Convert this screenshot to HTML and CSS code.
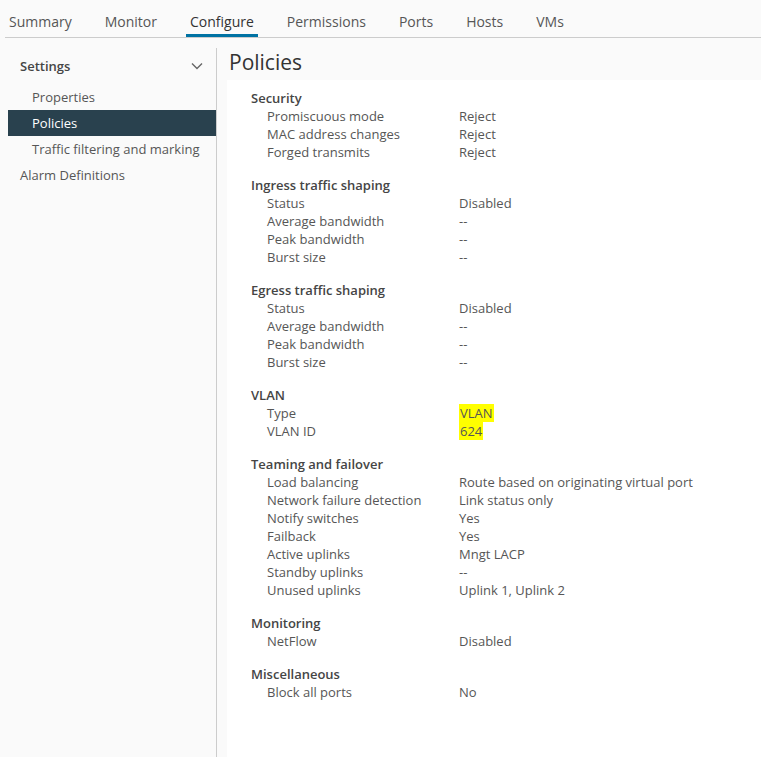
FILE: index.html
```html
<!DOCTYPE html>
<html>
<head>
<meta charset="utf-8">
<link rel="stylesheet" href="styles.css">
</head>
<body>
<nav class="tabs">
  <span class="tab">Summary</span>
  <span class="tab">Monitor</span>
  <span class="tab active">Configure</span>
  <span class="tab">Permissions</span>
  <span class="tab">Ports</span>
  <span class="tab">Hosts</span>
  <span class="tab">VMs</span>
</nav>
<div class="main">
  <aside class="sidebar">
    <div class="group-head">
      <span>Settings</span>
      <svg class="chev" width="12" height="8" viewBox="0 0 12 8"><path d="M1 1.5 L6 6.5 L11 1.5" fill="none" stroke="#666" stroke-width="1.4"/></svg>
    </div>
    <div class="nav-item sub">Properties</div>
    <div class="nav-item sub selected">Policies</div>
    <div class="nav-item sub">Traffic filtering and marking</div>
    <div class="nav-item">Alarm Definitions</div>
  </aside>
  <section class="content">
    <h1 class="title">Policies</h1>
    <div class="panel">
      <div class="section">
        <div class="sec-head">Security</div>
        <div class="row"><span class="label">Promiscuous mode</span><span class="value">Reject</span></div>
        <div class="row"><span class="label">MAC address changes</span><span class="value">Reject</span></div>
        <div class="row"><span class="label">Forged transmits</span><span class="value">Reject</span></div>
      </div>
      <div class="section">
        <div class="sec-head">Ingress traffic shaping</div>
        <div class="row"><span class="label">Status</span><span class="value">Disabled</span></div>
        <div class="row"><span class="label">Average bandwidth</span><span class="value">--</span></div>
        <div class="row"><span class="label">Peak bandwidth</span><span class="value">--</span></div>
        <div class="row"><span class="label">Burst size</span><span class="value">--</span></div>
      </div>
      <div class="section">
        <div class="sec-head">Egress traffic shaping</div>
        <div class="row"><span class="label">Status</span><span class="value">Disabled</span></div>
        <div class="row"><span class="label">Average bandwidth</span><span class="value">--</span></div>
        <div class="row"><span class="label">Peak bandwidth</span><span class="value">--</span></div>
        <div class="row"><span class="label">Burst size</span><span class="value">--</span></div>
      </div>
      <div class="section">
        <div class="sec-head">VLAN</div>
        <div class="row"><span class="label">Type</span><span class="value"><mark class="hl">VLAN</mark></span></div>
        <div class="row"><span class="label">VLAN ID</span><span class="value"><mark class="hl">624</mark></span></div>
      </div>
      <div class="section">
        <div class="sec-head">Teaming and failover</div>
        <div class="row"><span class="label">Load balancing</span><span class="value">Route based on originating virtual port</span></div>
        <div class="row"><span class="label">Network failure detection</span><span class="value">Link status only</span></div>
        <div class="row"><span class="label">Notify switches</span><span class="value">Yes</span></div>
        <div class="row"><span class="label">Failback</span><span class="value">Yes</span></div>
        <div class="row"><span class="label">Active uplinks</span><span class="value">Mngt LACP</span></div>
        <div class="row"><span class="label">Standby uplinks</span><span class="value">--</span></div>
        <div class="row"><span class="label">Unused uplinks</span><span class="value">Uplink 1, Uplink 2</span></div>
      </div>
      <div class="section">
        <div class="sec-head">Monitoring</div>
        <div class="row"><span class="label">NetFlow</span><span class="value">Disabled</span></div>
      </div>
      <div class="section">
        <div class="sec-head">Miscellaneous</div>
        <div class="row"><span class="label">Block all ports</span><span class="value">No</span></div>
      </div>
    </div>
  </section>
</div>
</body>
</html>
```
FILE: styles.css
```css
html, body {
  margin: 0;
  padding: 0;
  height: 100%;
}
body {
  background: #fafafa;
  font-family: "Open Sans", "Lato", sans-serif;
  color: #565656;
  overflow: hidden;
}
.tabs {
  display: flex;
  margin-left: 5px;
  height: 37px;
  border-bottom: 1px solid #cccccc;
  gap: 25px;
}
.tab {
  padding: 0 4px;
  font-size: 14px;
  line-height: 43px;
  height: 37px;
  color: #565656;
  box-sizing: border-box;
}
.tab.active {
  color: #333;
  border-bottom: 3px solid #0072a3;
}
.main {
  display: flex;
  height: calc(100% - 38px);
}
.sidebar {
  flex: none;
  margin-top: 10px;
  border-right: 1px solid #cccccc;
  box-sizing: border-box;
  width: 217px;
  padding-left: 8px;
}
.group-head {
  display: flex;
  align-items: center;
  justify-content: space-between;
  height: 36px;
  padding: 0 13px 0 12px;
  font-weight: 600;
  font-size: 13px;
  color: #454545;
}
.chev {
  display: block;
}
.nav-item {
  height: 26px;
  line-height: 26px;
  font-size: 13px;
  padding-left: 12px;
  color: #565656;
}
.nav-item.sub {
  padding-left: 24px;
}
.nav-item.selected {
  background: #29414e;
  color: #fff;
}
.content {
  flex: 1;
  margin-left: 10px;
  display: flex;
  flex-direction: column;
}
.title {
  margin: 0;
  font-weight: normal;
  font-size: 21px;
  color: #333;
  height: 42px;
  line-height: 49px;
  padding-left: 2px;
}
.panel {
  flex: 1;
  background: #fff;
  padding: 9px 0 0 24px;
}
.section {
  margin-bottom: 15px;
}
.sec-head {
  font-weight: 600;
  font-size: 13px;
  line-height: 18px;
  color: #454545;
}
.row {
  display: flex;
  font-size: 13px;
  line-height: 18px;
}
.label {
  padding-left: 16px;
  box-sizing: border-box;
  flex: none;
  width: 208px;
}
.value {
  color: #565656;
}
.hl {
  background: #ffff00;
  color: #565656;
  padding: 0 1px;
}
```
